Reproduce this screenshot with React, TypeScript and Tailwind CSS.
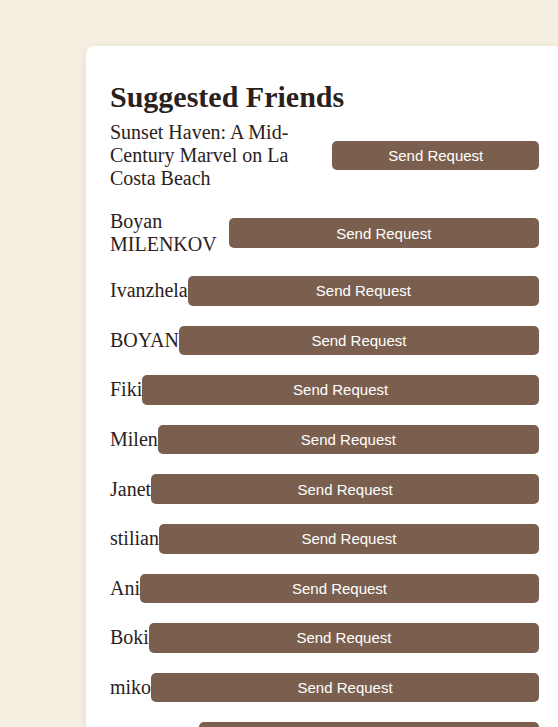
const friends = [
  'Sunset Haven: A Mid-Century Marvel on La Costa Beach',
  'Boyan MILENKOV',
  'Ivanzhela',
  'BOYAN',
  'Fiki',
  'Milen',
  'Janet',
  'stilian',
  'Ani',
  'Boki',
  'miko',
  'Alexandria',
];

export default function App() {
  return (
    <div className="min-h-screen overflow-hidden bg-[#f5efe2] pt-[46px] font-['Liberation_Serif',serif]">
      <div className="ml-[86px] w-[477px] rounded-lg bg-white px-6 pt-[34px] pb-6 shadow-[0_2px_8px_rgba(0,0,0,0.08)]">
        <h2 className="mb-[-3px] text-[30px] font-bold leading-[normal] text-[#2b211c]">Suggested Friends</h2>
        <ul>
          {friends.map((name) => (
            <li key={name} className="flex items-center py-[10px]">
              <span className="text-[20px] leading-[normal] text-[#2b211c]">{name}</span>
              <button className="w-full rounded-[5px] bg-[#7b5f4e] py-[6.3px] font-['Liberation_Sans',sans-serif] text-[15px] leading-[normal] text-white">
                Send Request
              </button>
            </li>
          ))}
        </ul>
      </div>
    </div>
  );
}
